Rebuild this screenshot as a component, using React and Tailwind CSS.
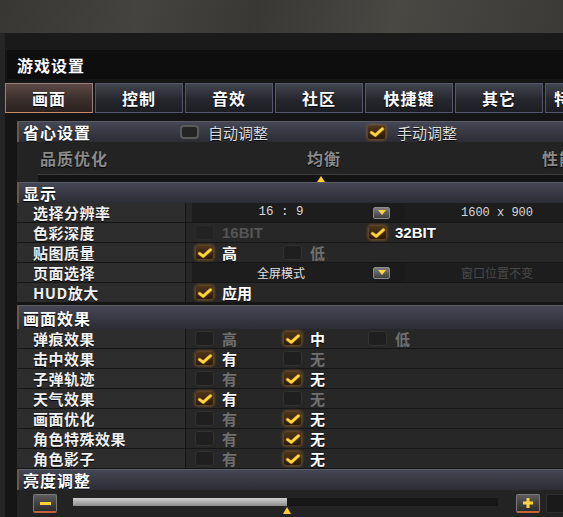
import React from 'react';

const tabs = ['画面', '控制', '音效', '社区', '快捷键', '其它', '特殊'];

const cjk = "font-['Noto_Sans_CJK_SC',sans-serif]";

function Check({ on, dim, header }) {
  if (on) {
    return (
      <span className="w-[19px] h-[15px] shrink-0 rounded-[3px] bg-[linear-gradient(#4f361a,#2a1a0b)] border border-[#5e4327] shadow-[0_0_3px_rgba(255,160,30,0.5)] flex items-center justify-center">
        <svg width="16" height="12" viewBox="0 0 16 12">
          <path d="M2.5 6.5 L6.2 9.3 L13.5 2.8" fill="none" stroke="#ff9a1a" strokeWidth="3.8" strokeLinecap="round" strokeLinejoin="round" opacity="0.45" />
          <path d="M2.5 6.5 L6.2 9.3 L13.5 2.8" fill="none" stroke="#ffd93d" strokeWidth="2.6" strokeLinecap="round" strokeLinejoin="round" />
        </svg>
      </span>
    );
  }
  if (header) {
    return <span className="w-[19px] h-[14px] shrink-0 rounded-[4px] bg-[#242424] border-2 border-[#5a5a5a]" />;
  }
  return (
    <span
      className={`w-[19px] h-[15px] shrink-0 rounded-[3px] border ${
        dim ? 'bg-[#232323] border-[#2b2b2b]' : 'bg-[#1f1f1f] border-[#323232]'
      }`}
    />
  );
}

function Opt({ o, w }) {
  return (
    <div className={`flex items-center gap-[8px] shrink-0 ${w}`}>
      {o && (
        <>
          <Check on={o.on} dim={o.dim} />
          <span
            className={`text-[15px] font-bold leading-none ${o.font || ''} ${
              o.on ? 'text-white [text-shadow:0_1px_1px_#000]' : o.dim ? 'text-[#555555]' : 'text-[#6f6f6f]'
            }`}
          >
            {o.t}
          </span>
        </>
      )}
    </div>
  );
}

function Options({ cols }) {
  return (
    <>
      <Opt o={cols[0]} w="w-[88px]" />
      <Opt o={cols[1]} w="w-[85px]" />
      <Opt o={cols[2]} w="w-[120px]" />
    </>
  );
}

function Row({ label, children }) {
  return (
    <div className="flex h-[20px] border-b border-[#161616]">
      <div className="w-[169px] shrink-0 pl-[16px] flex items-center bg-[#2d2d2d] border-r border-[#161616] text-[15px] tracking-[0.5px] font-bold text-[#f0f0f0] [text-shadow:0_1px_1px_#000] leading-none whitespace-nowrap">
        {label}
      </div>
      <div className="flex-1 flex items-center bg-[#272727] pl-[9px] min-w-0">{children}</div>
    </div>
  );
}

function Header({ children, tall }) {
  return (
    <div
      className={`${tall ? 'h-[24px]' : 'h-[21px]'} shrink-0 flex items-center border-t border-[#5b5d69] border-l-2 border-l-[#6b5a4a] bg-[linear-gradient(#454755,#2b2c34)] pl-[4px] text-[16px] font-bold tracking-[1px] text-white [text-shadow:0_1px_1px_#000] leading-none`}
    >
      {children}
    </div>
  );
}

function DropBtn() {
  return (
    <div className="w-[35px] h-[19px] shrink-0 flex items-center bg-[#1b1b1b]">
      <div className="ml-[3px] w-[17px] h-[12px] rounded-[2px] border border-[#8a8a8a] bg-[linear-gradient(#7c7c7c,#3e3e3e)] flex items-center justify-center">
        <svg width="8" height="5" viewBox="0 0 8 5">
          <path d="M0 0 L8 0 L4 5 Z" fill="#ffd23a" />
        </svg>
      </div>
    </div>
  );
}

function Select({ left, right, leftCls, rightCls }) {
  return (
    <div className="flex items-center -ml-[3px] h-[19px]">
      <div className={`w-[178px] h-[19px] shrink-0 bg-[#1d1d1d] flex items-center justify-center ${leftCls}`}>{left}</div>
      <DropBtn />
      <div className={`w-[184px] h-[19px] shrink-0 bg-[#1d1d1d] flex items-center justify-center ${rightCls}`}>{right}</div>
    </div>
  );
}

function SmallBtn({ plus }) {
  return (
    <div className="w-[24px] h-[19px] shrink-0 rounded-[2px] border border-[#7a7a7a] border-b-2 border-b-[#c0653a] bg-[linear-gradient(#5c5c5c,#2c2c2c)] flex items-center justify-center">
      {plus ? (
        <svg width="12" height="12" viewBox="0 0 12 12">
          <path d="M6 1 V11 M1 6 H11" stroke="#ffd23a" strokeWidth="3" />
        </svg>
      ) : (
        <div className="w-[11px] h-[3px] bg-[#ffd23a]" />
      )}
    </div>
  );
}

const effects = [
  ['弹痕效果', [{ t: '高' }, { t: '中', on: true }, { t: '低' }]],
  ['击中效果', [{ t: '有', on: true }, { t: '无' }, null]],
  ['子弹轨迹', [{ t: '有' }, { t: '无', on: true }, null]],
  ['天气效果', [{ t: '有', on: true }, { t: '无' }, null]],
  ['画面优化', [{ t: '有' }, { t: '无', on: true }, null]],
  ['角色特殊效果', [{ t: '有' }, { t: '无', on: true }, null]],
  ['角色影子', [{ t: '有' }, { t: '无', on: true }, null]],
];

export default function App() {
  const bit = "font-['Liberation_Sans',sans-serif]";
  return (
    <div className={`w-[563px] h-[517px] overflow-hidden bg-[#151515] flex flex-col ${cjk}`}>
      {/* top backdrop */}
      <div className="h-[33px] shrink-0 bg-[linear-gradient(105deg,#393734_0%,#45433f_25%,#3a3835_45%,#4a4843_70%,#3c3a37_100%)]" />
      <div className="h-[17px] shrink-0 bg-[#1a1a1a] border-l-[5px] border-l-[#262626]" />

      <div className="flex-1 flex flex-col border-l-[5px] border-l-[#242424] min-h-0">
        {/* title */}
        <div className="h-[29px] shrink-0 ml-[2px] bg-[#0e0e0e] flex items-center pl-[10px] text-[16px] text-white font-bold tracking-[1px] [text-shadow:0_1px_1px_#000]">
          游戏设置
        </div>

        {/* tabs */}
        <div className="mt-[4px] h-[30px] shrink-0 flex gap-[2px]">
          {tabs.map((t, i) => (
            <div
              key={t}
              className={`w-[88px] shrink-0 flex items-center border text-[16px] font-bold text-white tracking-[1px] [text-shadow:0_1px_1px_#000] ${
                i === 6 ? 'justify-start pl-[8px]' : 'justify-center'
              } ${
                i === 0
                  ? 'border-[#9c807e] border-b-[#c88c66] bg-[linear-gradient(#5c4945,#3b2f2b_55%,#2b211e)]'
                  : 'border-[#55586c] bg-[linear-gradient(#42444f,#26272e_55%,#1d1e23)]'
              }`}
            >
              {t}
            </div>
          ))}
        </div>

        {/* content */}
        <div className="flex-1 flex flex-col pl-[12px] pt-[8px] min-h-0">
          <Header>
            <div className="w-[157px] shrink-0">省心设置</div>
            <div className="w-[187px] shrink-0 flex items-center gap-[9px]">
              <Check header />
              <span className="text-[15px] font-normal text-[#dddddd] tracking-[0px]">自动调整</span>
            </div>
            <div className="flex items-center gap-[11px]">
              <Check on />
              <span className="text-[15px] font-normal text-[#dddddd] tracking-[0px]">手动调整</span>
            </div>
          </Header>

          {/* quality slider */}
          <div className="h-[40px] shrink-0 bg-[#232323] flex flex-col">
            <div className="flex items-center pl-[23px] pt-[4px] text-[16px] font-bold text-[#8a8a8a] tracking-[1px] whitespace-nowrap [text-shadow:0_1px_1px_#000]">
              <div className="w-[267px] shrink-0">品质优化</div>
              <div className="w-[235px] shrink-0">均衡</div>
              <div>性能</div>
            </div>
            <div className="relative mt-[4px] ml-[21px] h-[8px] bg-[#141414] border-t border-[#3c3c3c]">
              <svg className="absolute left-[279px] top-[1px]" width="8" height="6" viewBox="0 0 8 6">
                <path d="M4 0 L8 6 L0 6 Z" fill="#ffcc33" />
              </svg>
            </div>
          </div>

          <Header>显示</Header>
          <Row label="选择分辨率">
            <Select
              left="16 : 9"
              right="1600 x 900"
              leftCls="font-['Liberation_Mono',monospace] text-[12.5px] text-[#d8d8d8]"
              rightCls="font-['Liberation_Mono',monospace] text-[12px] text-[#d8d8d8]"
            />
          </Row>
          <Row label="色彩深度">
            <Options cols={[{ t: '16BIT', dim: true, font: bit }, null, { t: '32BIT', on: true, font: bit }]} />
          </Row>
          <Row label="贴图质量">
            <Options cols={[{ t: '高', on: true }, { t: '低' }, null]} />
          </Row>
          <Row label="页面选择">
            <Select left="全屏模式" right="窗口位置不变" leftCls="text-[12px] text-[#e0e0e0]" rightCls="text-[12px] text-[#4a4a4a]" />
          </Row>
          <Row label="HUD放大">
            <Options cols={[{ t: '应用', on: true }, null, null]} />
          </Row>

          <div className="mt-[2px]">
            <Header tall>画面效果</Header>
          </div>
          {effects.map(([label, cols]) => (
            <Row key={label} label={label}>
              <Options cols={cols} />
            </Row>
          ))}

          <Header>亮度调整</Header>
          <div className="flex-1 bg-[#232323] flex items-start pt-[4px] pl-[16px]">
            <SmallBtn />
            <div className="relative ml-[16px] mt-[4px] w-[425px] h-[8px] shrink-0 bg-[#161616]">
              <div className="w-[214px] h-full bg-[linear-gradient(#d0d0d0,#8c8c8c)]" />
              <svg className="absolute left-[210px] top-[9px]" width="8" height="7" viewBox="0 0 8 7">
                <path d="M4 0 L8 7 L0 7 Z" fill="#ffcc33" />
              </svg>
            </div>
            <div className="ml-[18px]">
              <SmallBtn plus />
            </div>
            <div className="ml-[6px] w-[40px] h-[19px] shrink-0 bg-[#1a1a1a] border border-[#2e2e2e]" />
          </div>
        </div>
      </div>
    </div>
  );
}
